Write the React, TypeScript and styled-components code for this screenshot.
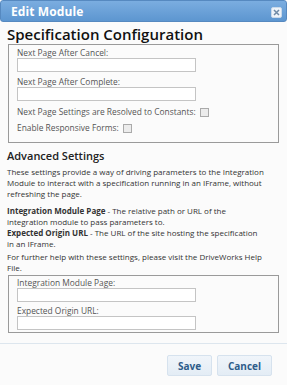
import React from "react";
import styled, { createGlobalStyle } from "styled-components";

const Global = createGlobalStyle`
  html, body {
    margin: 0;
    padding: 0;
    background: #fbfbfb;
  }
  body {
    font-family: "Open Sans", "DejaVu Sans", sans-serif;
    color: #333;
  }
`;

const Dialog = styled.div`
  width: 287px;
  height: 385px;
  box-sizing: border-box;
  background: #fbfbfb;
  display: flex;
  flex-direction: column;
`;

const TitleBar = styled.div`
  height: 22px;
  flex: none;
  background: linear-gradient(#7bade0, #5d96d0);
  border: 1px solid #5689c0;
  border-radius: 3px;
  box-sizing: border-box;
  display: flex;
  align-items: center;
  justify-content: space-between;
  padding: 0 4px 0 10px;
`;

const Title = styled.span`
  color: #fff;
  font-weight: 700;
  font-size: 12px;
  letter-spacing: 0.1px;
`;

const Close = styled.button`
  width: 11px;
  height: 11px;
  padding: 0;
  border: 1px solid #c9d9ea;
  border-radius: 2px;
  background: #eef3f9;
  display: flex;
  align-items: center;
  justify-content: center;
  margin-top: 3px;
`;

const Body = styled.div`
  padding: 3px 8px 0 7px;
  display: flex;
  flex-direction: column;
`;

const H1 = styled.h1`
  margin: 0;
  font-size: 15px;
  font-weight: 600;
  color: #111;
  line-height: 18px;
`;

const H2 = styled.h2`
  margin: 6px 0 3px;
  font-size: 11px;
  font-weight: 600;
  color: #222;
  line-height: 14px;
`;

const Box = styled.div<{ $mt: number; $pt: number; $pb: number }>`
  margin: ${(p) => p.$mt}px 0 0 1px;
  border: 1px solid #9a9a9a;
  padding: ${(p) => p.$pt}px 8px ${(p) => p.$pb}px 8px;
  display: flex;
  flex-direction: column;
`;

const Label = styled.div<{ $gap?: number }>`
  font-size: 8.4px;
  color: #555;
  line-height: 10px;
  height: 10px;
  display: flex;
  align-items: center;
  gap: 4px;
  margin-top: ${(p) => p.$gap ?? 0}px;
`;

const Input = styled.div`
  width: 179px;
  height: 14px;
  flex: none;
  box-sizing: border-box;
  border: 1px solid #c4c4c4;
  background: #fff;
`;

const Check = styled.span`
  width: 7px;
  height: 7px;
  border: 1px solid #aaa;
  background: #ececec;
  display: inline-block;
`;

const P = styled.p<{ $mb: number }>`
  margin: 0 0 ${(p) => p.$mb}px;
  font-size: 8px;
  line-height: 11px;
  color: #333;
  white-space: nowrap;
`;

const Footer = styled.div`
  border-top: 1px solid #dde6ee;
  margin-top: 10px;
  display: flex;
  justify-content: flex-end;
  align-items: flex-start;
  padding: 11px 15px 0 0;
  gap: 5px;
`;

const Btn = styled.button<{ $w: number }>`
  height: 21px;
  width: ${(p) => p.$w}px;
  padding: 0;
  border: 1px solid #d6e2ee;
  border-radius: 2px;
  background: linear-gradient(#f0f5fa, #e3ecf5);
  color: #2e5c8a;
  font-family: "Open Sans", sans-serif;
  font-weight: 700;
  font-size: 10px;
`;

export default function App() {
  return (
    <Dialog>
      <Global />
      <TitleBar>
        <Title>Edit Module</Title>
        <Close>
          <svg width="7" height="7" viewBox="0 0 7 7">
            <path d="M1 1L6 6M6 1L1 6" stroke="#6f8aa6" strokeWidth="1.5" />
          </svg>
        </Close>
      </TitleBar>
      <Body>
        <H1>Specification Configuration</H1>
        <Box $mt={1} $pt={3} $pb={9}>
          <Label>Next Page After Cancel:</Label>
          <Input />
          <Label $gap={5}>Next Page After Complete:</Label>
          <Input />
          <Label $gap={6}>
            Next Page Settings are Resolved to Constants: <Check />
          </Label>
          <Label $gap={6}>
            Enable Responsive Forms: <Check />
          </Label>
        </Box>
        <H2>Advanced Settings</H2>
        <P $mb={6}>
          These settings provide a way of driving parameters to the Integration
          <br />
          Module to interact with a specification running in an IFrame, without
          <br />
          refreshing the page.
        </P>
        <P $mb={2}>
          <b>Integration Module Page</b> - The relative path or URL of the
          <br />
          integration module to pass parameters to.
          <br />
          <b>Expected Origin URL</b> - The URL of the site hosting the specification
          <br />
          in an IFrame.
        </P>
        <P $mb={0}>
          For further help with these settings, please visit the DriveWorks Help
          <br />
          File.
        </P>
        <Box $mt={2} $pt={2} $pb={2}>
          <Label>Integration Module Page:</Label>
          <Input />
          <Label $gap={4}>Expected Origin URL:</Label>
          <Input />
        </Box>
      </Body>
      <Footer>
        <Btn $w={45}>Save</Btn>
        <Btn $w={55}>Cancel</Btn>
      </Footer>
    </Dialog>
  );
}
